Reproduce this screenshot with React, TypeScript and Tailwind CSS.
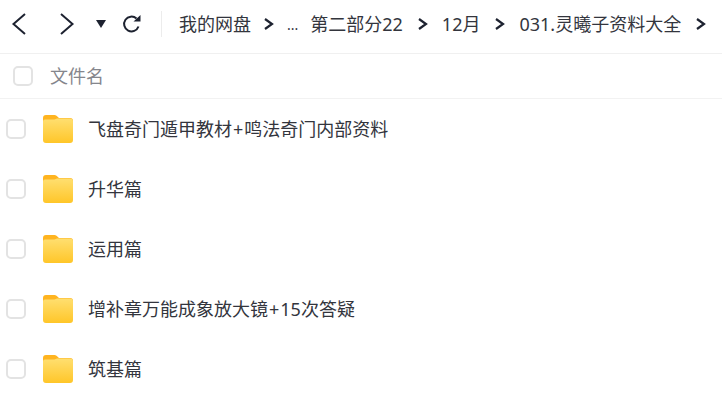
const folders = [
  ["飞盘奇门遁甲教材", "鸣法奇门内部资料"],
  ["升华篇"],
  ["运用篇"],
  ["增补章万能成象放大镜", "15次答疑"],
  ["筑基篇"],
];

const crumbs = ["第二部分22", "12月", "031.灵曦子资料大全"];

function Sep() {
  return (
    <svg width="10" height="12" viewBox="0 0 10 12" className="shrink-0" fill="none">
      <path d="M1 1l7 5-7 5" stroke="#1d2230" strokeWidth="2.2" />
    </svg>
  );
}

function Check() {
  return <div className="w-[20px] h-[20px] rounded-[5px] border-2 border-[#e3e3e3] bg-white shrink-0" />;
}

function FolderIcon() {
  return (
    <svg width="30" height="28" viewBox="0 0 30 28" className="shrink-0">
      <defs>
        <linearGradient id="folderFront" x1="0" y1="0" x2="0" y2="1">
          <stop offset="0" stopColor="#ffdf70" />
          <stop offset="1" stopColor="#ffc629" />
        </linearGradient>
      </defs>
      <path d="M0 3a3 3 0 0 1 3-3h8.500a3 3 0 0 1 2 .8L16 3h11a3 3 0 0 1 3 3v6H0z" fill="#ffb41f" />
      <path d="M0 6.500a2 2 0 0 1 2-2h9.500l2.500-1h13a3 3 0 0 1 3 3V25a3 3 0 0 1-3 3H3a3 3 0 0 1-3-3z" fill="url(#folderFront)" />
    </svg>
  );
}

export default function App() {
  return (
    <div className="w-[722px] h-[413px] overflow-hidden bg-white text-[18px] text-[#33353d] font-['Noto_Sans','Noto_Sans_CJK_SC',sans-serif]">
      {/* Top bar */}
      <div className="h-[54px] flex items-center border-b border-[#f0f0f0] pb-[5px]">
        <svg width="16" height="24" viewBox="0 0 16 24" fill="none" className="ml-[11px] shrink-0">
          <path d="M14 2L2.500 12 14 22" stroke="#1d2230" strokeWidth="2" />
        </svg>
        <svg width="16" height="24" viewBox="0 0 16 24" fill="none" className="ml-[32px] shrink-0">
          <path d="M2 2l11.500 10L2 22" stroke="#1d2230" strokeWidth="2" />
        </svg>
        <svg width="10" height="8" viewBox="0 0 10 8" className="ml-[21px] shrink-0">
          <path d="M0 0h10L5 8z" fill="#1d2230" />
        </svg>
        <svg width="20" height="20" viewBox="0 0 20 20" fill="none" className="ml-[16px] shrink-0">
          <path d="M16.500 12.500A7.400 7.400 0 1 1 14.500 4.500" stroke="#1d2230" strokeWidth="2" />
          <path d="M11.500 7.500h7v-6.500z" fill="#1d2230" />
        </svg>
        <div className="w-px h-[26px] bg-[#ececec] ml-[19px]" />
        <span className="ml-[17px]">我的网盘</span>
        <div className="ml-[13px]"><Sep /></div>
        <span className="ml-[13px] mr-[12px] text-[14px]">...</span>
        {crumbs.map((c) => (
          <div key={c} className="flex items-center">
            <span>{c}</span>
            <div className="ml-[15px] mr-[14px]"><Sep /></div>
          </div>
        ))}
      </div>

      {/* Column header */}
      <div className="h-[45px] flex items-center border-b border-[#f2f2f2] pl-[13px]">
        <Check />
        <span className="ml-[17px] text-[#85868c]">文件名</span>
      </div>

      {/* Folder rows */}
      {folders.map((parts) => (
        <div key={parts[0]} className="h-[60px] flex items-center pl-[6px]">
          <Check />
          <div className="ml-[17px]"><FolderIcon /></div>
          <span className="ml-[15px] whitespace-nowrap">
            {parts[0]}
            {parts[1] && <span className="px-[1px]">+</span>}
            {parts[1]}
          </span>
        </div>
      ))}
    </div>
  );
}
